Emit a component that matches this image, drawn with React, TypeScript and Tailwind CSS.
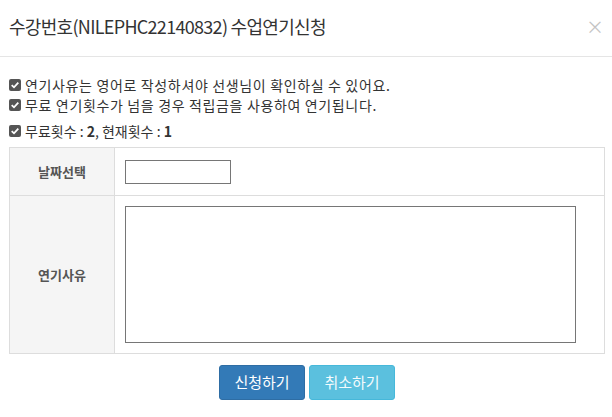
import React from 'react';

const notices = [
  { text: '연기사유는 영어로 작성하셔야 선생님이 확인하실 수 있어요.' },
  { text: '무료 연기횟수가 넘을 경우 적립금을 사용하여 연기됩니다.' },
];

function CheckBox() {
  return (
    <svg width="12" height="12" viewBox="0 0 12 12" className="shrink-0">
      <rect x="0" y="0" width="12" height="12" rx="2" fill="#555" />
      <path d="M2.7 6.1 L5 8.3 L9.3 3.7" stroke="#fff" strokeWidth="1.8" fill="none" />
    </svg>
  );
}

export default function App() {
  return (
    <div
      className="w-[612px] h-[417px] bg-white text-[#333]"
      style={{ fontFamily: '"Noto Sans CJK KR", "Noto Sans", sans-serif' }}
    >
      {/* header */}
      <div className="h-[57px] flex items-center justify-between pl-[9px] pr-[8px] pb-[4px] border-b border-[#e5e5e5]">
        <h4 className="text-[18px] tracking-[-0.7px] text-[#333] leading-none">수강번호(NILEPHC22140832) 수업연기신청</h4>
        <span className="text-[#c4c4c4] text-[18px] leading-none">×</span>
      </div>

      {/* body */}
      <div className="px-[9px] pt-[18px]">
        <ul className="flex flex-col text-[14px] leading-[20px] tracking-[0.65px]">
          {notices.map((n, i) => (
            <li key={i} className="flex items-center gap-[4px]">
              <CheckBox />
              <span>{n.text}</span>
            </li>
          ))}
          <li className="flex items-center gap-[4px] mt-[6px] tracking-normal">
            <CheckBox />
            <span>
              무료횟수 : <b>2</b>, 현재횟수 : <b>1</b>
            </span>
          </li>
        </ul>

        <table className="mt-[6px] w-[596px] border-collapse border border-[#ddd] text-[13px]">
          <tbody>
            <tr className="h-[48px]">
              <th className="w-[105px] bg-[#f5f5f5] border border-[#ddd] font-bold text-[#555]">날짜선택</th>
              <td className="border border-[#ddd] pl-[10px]">
                <div className="w-[106px] h-[24px] border border-[#767676]" />
              </td>
            </tr>
            <tr className="h-[158px]">
              <th className="bg-[#f5f5f5] border border-[#ddd] font-bold text-[#555]">연기사유</th>
              <td className="border border-[#ddd] pl-[10px]">
                <div className="w-[451px] h-[137px] border border-[#767676]" />
              </td>
            </tr>
          </tbody>
        </table>

        <div className="flex justify-center gap-[4px] mt-[11px] pl-[2px]">
          <button className="w-[86px] h-[35px] rounded-[3px] bg-[#337ab7] border border-[#2e6da4] text-white text-[15px]">
            신청하기
          </button>
          <button className="w-[86px] h-[35px] rounded-[3px] bg-[#5bc0de] border border-[#46b8da] text-[#f4fbfd] text-[15px]">
            취소하기
          </button>
        </div>
      </div>
    </div>
  );
}
